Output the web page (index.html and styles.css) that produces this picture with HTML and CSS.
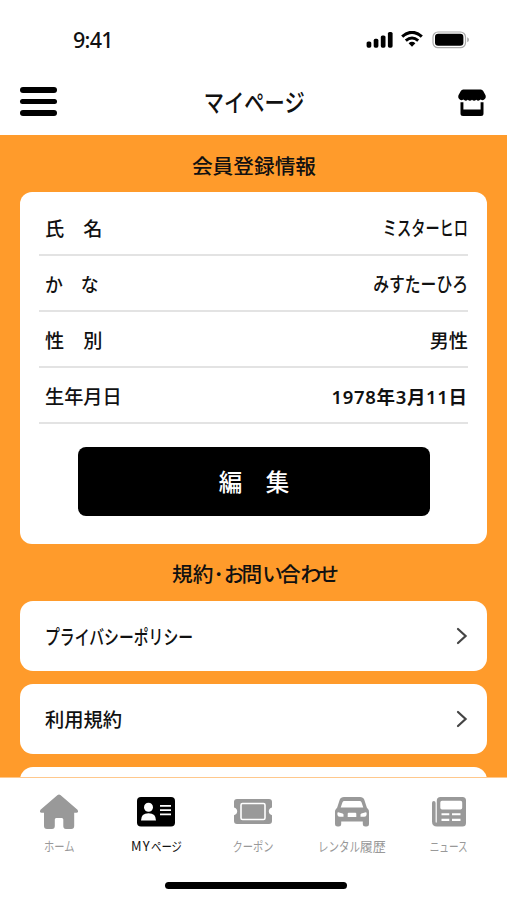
FILE: index.html
```html
<!DOCTYPE html>
<html lang="ja">
<head>
<meta charset="utf-8">
<title>マイページ</title>
<link rel="stylesheet" href="styles.css">
</head>
<body>
<div class="screen">
  <div class="status">
    <span class="time">9:41</span>
    <svg class="status-icons" width="104" height="18" viewBox="0 0 104 18">
      <rect x="0.6" y="10.5" width="4.7" height="6.2" rx="1.6"/>
      <rect x="7.7" y="7.8" width="4.7" height="8.9" rx="1.6"/>
      <rect x="14.8" y="4.5" width="4.7" height="12.2" rx="1.6"/>
      <rect x="21.9" y="1" width="4.7" height="15.7" rx="1.6"/>
      <path d="M36.2 5.6Q46 -2.8 55.8 5.6" fill="none" stroke="#000" stroke-width="3.2"/>
      <path d="M39.8 9.6Q46 4.3 52.2 9.6" fill="none" stroke="#000" stroke-width="3"/>
      <path d="M42.6 12.2Q46 9.4 49.4 12.2L46 15.8Z"/>
      <rect x="67" y="1" width="32.5" height="15.7" rx="5" fill="none" stroke="#aaa" stroke-width="1.2"/>
      <rect x="69" y="2.8" width="28.4" height="12" rx="3.2"/>
      <path d="M101.2 6.3Q103 7 103 8.8Q103 10.6 101.2 11.3Z" fill="#aaa"/>
    </svg>
  </div>
  <header class="header">
    <div class="menu"><i></i><i></i><i></i></div>
    <h1><span class="w-title">マイページ</span></h1>
    <svg width="28" height="28" viewBox="0 0 28 28">
      <path d="M5.2 0.5H22.8Q24.4 0.5 25.2 2L27.4 6Q28.2 8 27.2 9.6Q25.3 12.2 22.6 10.6Q20.3 12.8 18.3 10.7Q16 12.8 14 10.7Q12 12.8 9.8 10.7Q7.6 12.8 5.4 10.6Q2.6 12.2 0.8 9.6Q-0.2 8 0.6 6L2.8 2Q3.6 0.5 5.2 0.5Z"/>
      <path d="M2.5 13.2H5.4V20.5H22.6V13.2H25.5V24.5Q25.5 27 23 27H5Q2.5 27 2.5 24.5Z"/>
    </svg>
  </header>
  <main class="content">
    <h2>会員登録情報</h2>
    <section class="card">
      <dl>
        <div class="row"><dt>氏　名</dt><dd><span class="w-name">ミスターヒロ</span></dd></div>
        <div class="row"><dt><span class="w-kana">か　な</span></dt><dd><span class="w-reading">みすたーひろ</span></dd></div>
        <div class="row"><dt>性　別</dt><dd>男性</dd></div>
        <div class="row"><dt>生年月日</dt><dd class="date">1978年3月11日</dd></div>
      </dl>
      <button class="edit">編　集</button>
    </section>
    <h2 class="contact">規約<b class="dot">･</b><b>お</b>問<b>い</b>合<b>わせ</b></h2>
    <nav class="links">
      <a class="link"><span class="w-privacy">プライバシーポリシー</span><svg width="12" height="18" viewBox="0 0 12 18"><path d="M2 2L9.6 9L2 16"/></svg></a>
      <a class="link"><span>利用規約</span><svg width="12" height="18" viewBox="0 0 12 18"><path d="M2 2L9.6 9L2 16"/></svg></a>
      <a class="link"></a>
    </nav>
  </main>
  <footer class="tabs">
    <a class="tab">
      <svg width="40" height="36" viewBox="0 0 40 36"><path d="M18.6 1Q20 0 21.4 1L38.5 15.8Q40 18.3 37.5 18.8H35.2V32Q35.2 35 32.2 35H27Q24.3 35 24.3 32V25.5Q24.3 24 22.8 24H17.2Q15.8 24 15.8 25.5V32Q15.8 35 13 35H8Q5 35 5 32V18.8H2.5Q0 18.3 1.5 15.8Z"/></svg>
      <span class="w-home">ホーム</span>
    </a>
    <a class="tab active">
      <svg width="40" height="36" viewBox="0 0 40 36"><rect x="1" y="3" width="38" height="29.5" rx="4"/><g fill="#fff"><circle cx="12.5" cy="13.2" r="4.5"/><path d="M5 26.5Q5 19.2 12.5 19.2Q20 19.2 20 26.5Z"/><path d="M24 11h11v1.7H24zM24 15.3h11v1.7H24zM24 19.6h11v1.7H24z"/></g></svg>
      <div class="label"><span class="latin">MY</span><span class="w-page">ページ</span></div>
    </a>
    <a class="tab coupon">
      <svg width="40" height="36" viewBox="0 0 40 36"><path d="M4 5H36Q39 5 39 8V13.4Q35.8 14.4 35.8 17.3Q35.8 20.2 39 21.2V27Q39 30 36 30H4Q1 30 1 27V21.2Q4.2 20.2 4.2 17.3Q4.2 14.4 1 13.4V8Q1 5 4 5Z"/><rect x="8" y="9.5" width="24" height="16" rx="1.5" fill="none" stroke="#fff" stroke-width="1.6"/></svg>
      <span class="w-coupon">クーポン</span>
    </a>
    <a class="tab">
      <svg width="40" height="36" viewBox="0 0 40 36"><path fill-rule="evenodd" d="M12 3H28Q31.2 3 32.3 5.8L34.8 13.5Q37 15.5 37 18V30.2Q37 32.6 34.5 32.6H33.3Q30.8 32.6 30.8 30.2V27.4H9.2V30.2Q9.2 32.6 6.7 32.6H5.5Q3 32.6 3 30.2V18Q3 15.5 5.2 13.5L7.7 5.8Q8.8 3 12 3ZM12.3 7Q11 7 10.5 8.2L8.7 13.6H31.3L29.5 8.2Q29 7 27.7 7ZM6.2 18.2Q5.4 18.2 5.4 19.2V20.5Q5.4 22.8 7.8 22.8H11.5V20.6Q11.5 19.8 10.6 19.5ZM33.8 18.2L29.4 19.5Q28.5 19.8 28.5 20.6V22.8H32.2Q34.6 22.8 34.6 20.5V19.2Q34.6 18.2 33.8 18.2ZM16.7 18.8Q15.7 18.8 15.7 19.8V23H24.3V19.8Q24.3 18.8 23.3 18.8Z"/></svg>
      <div class="label"><span class="w-rental">レンタル</span><span>履歴</span></div>
    </a>
    <a class="tab">
      <svg width="40" height="36" viewBox="0 0 40 36"><path fill-rule="evenodd" d="M11.5 3H33.5Q37 3 37 6.5V29Q37 32.5 33.5 32.5H8Q3 32.5 3 27.5V8.9Q3 7 4.8 7Q6.6 7 6.6 8.9V27.5Q6.6 28.8 7.2 28.8Q7.8 28.8 7.8 27.5V6.5Q7.8 3 11.5 3ZM13 6.7Q11.3 6.7 11.3 8.4V13.8Q11.3 15.5 13 15.5H31.5Q33.2 15.5 33.2 13.8V8.4Q33.2 6.7 31.5 6.7ZM12.5 19.2V21.3H20.3V19.2ZM23 19.2V21.3H31.5V19.2ZM12.5 24.8V26.9H20.3V24.8ZM23 24.8V26.9H31.5V24.8Z"/></svg>
      <span class="w-news">ニュース</span>
    </a>
    <div class="home-bar"></div>
  </footer>
</div>
</body>
</html>
```

FILE: styles.css
```css
* { box-sizing: border-box; }
body {
  margin: 0;
  background: #fff;
  color: #111;
  font-family: "Noto Sans CJK JP", sans-serif;
  font-weight: 500;
}
h1, h2, dl, dd { margin: 0; }
h1, h2 { font-weight: 500; }
span { display: inline-block; white-space: nowrap; }
svg { flex: none; }
.screen { width: 507px; height: 900px; overflow: hidden; display: flex; flex-direction: column; }
.status { height: 68px; padding: 23px 37px 0 73px; display: flex; justify-content: space-between; }
.time { font: 500 21.5px/33px "Noto Sans", sans-serif; letter-spacing: -0.7px; }
.status-icons { margin-top: 8px; }
.header { height: 67px; flex: none; padding: 0 21px 0 20px; display: flex; align-items: center; justify-content: space-between; }
.header h1 { font-size: 25px; line-height: 34px; width: 110px; display: flex; justify-content: center; margin: -1px 0 0 -7px; }
.header svg { margin-top: 3px; }
.menu { width: 37px; display: grid; gap: 6px; }
.menu i { height: 5.7px; border-radius: 3px; background: #000; }
.content { height: 642px; background: #ff9b2b; overflow: hidden; padding: 0 20px; flex: none; }
.content h2 { height: 57px; font-size: 20.7px; line-height: 60px; text-align: center; margin-left: 1px; white-space: nowrap; }
.content .contact { line-height: 58px; }
.content h2 b { font-weight: 500; letter-spacing: -3px; }
.content h2 .dot { letter-spacing: 0; }
.card { height: 352px; border-radius: 12px; background: #fff; padding: 8px 19px 0; }
.row { height: 56px; border-bottom: 2px solid #e3e3e3; padding: 1px 0 0 6px; display: flex; justify-content: space-between; align-items: center; font-size: 19.2px; }
.date { font-family: "Noto Sans", "Noto Sans CJK JP", sans-serif; font-weight: 600; font-size: 18.5px; letter-spacing: 0.65px; margin-right: 0.35px; }
.edit { display: block; width: 352px; height: 69px; margin: 23px auto 0 39px; border: 0; padding: 0; border-radius: 8px; background: #000; color: #fff; font: 500 23.5px/69px "Noto Sans CJK JP", sans-serif; }
.links { display: grid; gap: 13px; }
.link { height: 70px; border-radius: 13px; background: #fff; padding: 0 19px 0 25px; display: flex; align-items: center; justify-content: space-between; font-size: 19.3px; }
.link path { fill: none; stroke: #444; stroke-width: 2.2; stroke-linecap: round; }

/* Condensed kana */
.w-title { transform: scaleX(0.81); }
.w-name, .w-reading, .w-privacy { font-size: 20px; }
.w-name { transform: scaleX(0.71); transform-origin: right; }
.w-reading { transform: scaleX(0.79); transform-origin: right; }
.w-kana { transform: scaleX(0.93); transform-origin: left; }
.w-privacy { transform: scaleX(0.742); transform-origin: left; }
.w-home, .w-coupon { transform: scaleX(0.79); }
.w-news { transform: scaleX(0.74); }
.w-page { transform: scaleX(0.8); transform-origin: left; margin-right: -8px; }
.w-rental { transform: scaleX(0.81); transform-origin: left; margin-right: -10px; }
.latin { letter-spacing: 1px; }

.tabs { height: 123px; position: relative; display: flex; padding: 16px 10px 0 11px; border-top: 1px solid #ffc88c; }
.tab { flex: 1; display: flex; flex-direction: column; align-items: center; font-size: 13px; line-height: 20px; color: #999; fill: #999; font-weight: 400; gap: 6px; }
.coupon { padding-right: 2px; }
.label { white-space: nowrap; }
.active { color: #111; fill: #000; }
.home-bar { position: absolute; left: 165px; bottom: 11px; width: 182px; height: 7px; border-radius: 4px; background: #000; }
```
